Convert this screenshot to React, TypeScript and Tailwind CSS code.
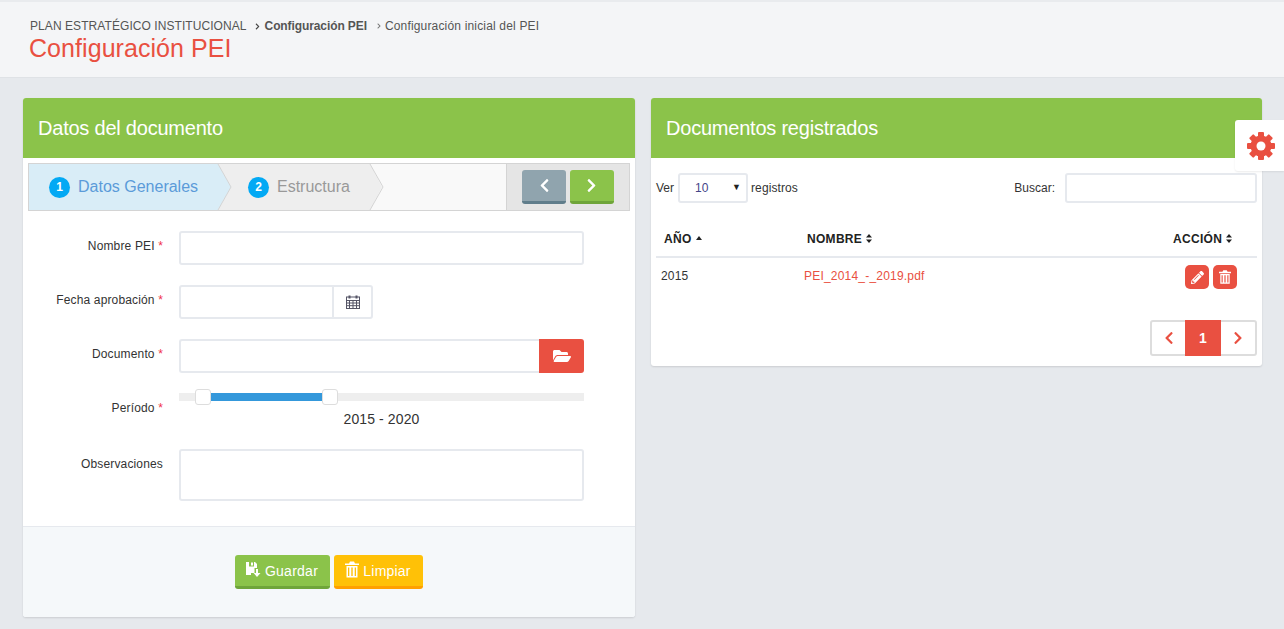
import React from "react";
import { FaChevronLeft, FaChevronRight, FaFolderOpen, FaPencilAlt } from "react-icons/fa";

const RED = "bg-[#e95041]";

function TrashIcon({ className }: { className?: string }) {
  return (
    <svg viewBox="0 0 14 16" className={className} fill="currentColor">
      <path d="M5 0h4l1 2h4v1.500H0V2h4zM1.500 4.500h11V16h-11zM3 6v8.500h1.300V6zm3.300 0v8.500h1.400V6zm3.400 0v8.500H11V6z" fillRule="evenodd" />
    </svg>
  );
}

function SaveIcon() {
  return (
    <svg viewBox="0 0 15 15" className="w-[15px] h-[15px] mt-[-3px]" fill="currentColor">
      <path d="M0 0h3v4.500h5V0h1l2 2v4H8.500v5H5v2H0z" />
      <path d="M5 0.500h2v3H5z" />
      <path d="M10 7h2v4h2.500L11 15l-3.500-4H10z" />
    </svg>
  );
}

function CalendarIcon() {
  return (
    <svg viewBox="0 0 14 14" className="w-[14px] h-[14px]" fill="none" stroke="currentColor" strokeWidth="1">
      <rect x="0.500" y="2" width="13" height="11.500" />
      <path d="M0.500 5.500h13M0.500 8h13M0.500 10.700h13M3.500 5.500v8M7 5.500v8M10.500 5.500v8" />
      <path d="M3.500 0.500v3M10.500 0.500v3" strokeWidth="2" />
    </svg>
  );
}

function GearIcon() {
  return (
    <svg viewBox="0 0 28 28" className="w-[28px] h-[28px]" fill="currentColor">
      <rect x="11" width="6" height="28" rx="1" />
      <rect x="11" width="6" height="28" rx="1" transform="rotate(45 14 14)" />
      <rect x="11" width="6" height="28" rx="1" transform="rotate(90 14 14)" />
      <rect x="11" width="6" height="28" rx="1" transform="rotate(135 14 14)" />
      <circle cx="14" cy="14" r="10.500" />
      <circle cx="14" cy="14" r="4.500" fill="#ffffff" />
    </svg>
  );
}

function SortBoth() {
  return (
    <svg viewBox="0 0 6 9" className="w-[6px] h-[9px] ml-[4px]" fill="currentColor">
      <path d="M3 0l3 3.500H0zM3 9L0 5.500h6z" />
    </svg>
  );
}

function FormRow({ label, required = true, children }: { label: string; required?: boolean; children: React.ReactNode }) {
  return (
    <div className="flex">
      <label className="w-[140px] shrink-0 text-right text-[12px] leading-[18px] pt-[6px] text-[#333] tracking-[0.15px]">
        {label}
        {required && <span className="text-[#f0324b]"> *</span>}
      </label>
      <div className="ml-[16px] w-[405px]">{children}</div>
    </div>
  );
}

const inputCls = "block w-full h-[34px] bg-white border-2 border-[#e6e9ee] rounded-[3px] outline-none";

function Panel({ title, children }: { title: string; children: React.ReactNode }) {
  return (
    <section className="bg-white rounded-[3px] shadow-[0_1px_2px_rgba(0,0,0,0.12)] overflow-hidden">
      <h2 className="h-[60px] bg-[#8bc34a] text-white text-[20px] tracking-[-0.22px] leading-[60px] pl-[15px]">{title}</h2>
      {children}
    </section>
  );
}

function Wizard() {
  return (
    <div className="relative mt-[5px] mx-[5px] h-[48px] border border-[#d4d4d4] bg-[#f9f9f9] flex">
      <div className="flex-1 relative">
        <svg className="absolute inset-0 w-[477px] h-[46px]" viewBox="0 0 477 46">
          <polygon points="189,0 341,0 353,23 341,46 189,46 202,23" fill="#eeeeee" />
          <polygon points="0,0 189,0 202,23 189,46 0,46" fill="#d9edf7" />
          <polyline points="189,0 202,23 189,46" fill="none" stroke="#d4d4d4" />
          <polyline points="341,0 354,23 341,46" fill="none" stroke="#d4d4d4" />
        </svg>
        <div className="relative flex items-center h-full">
          <div className="flex items-center w-[219px] pl-[20px] text-[16px] text-[#5b9bd9]">
            <span className="w-[21px] h-[21px] rounded-full bg-[#03a9f4] text-white text-[12px] font-bold flex items-center justify-center mr-[8px]">1</span>
            Datos Generales
          </div>
          <div className="flex items-center text-[16px] text-[#999]">
            <span className="w-[21px] h-[21px] rounded-full bg-[#03a9f4] text-white text-[12px] font-bold flex items-center justify-center mr-[8px]">2</span>
            Estructura
          </div>
        </div>
      </div>
      <div className="w-[123px] shrink-0 bg-[#e5e5e5] border-l border-[#d4d4d4] flex items-center pl-[15px] gap-[4px]">
        <button className="w-[44px] h-[34px] rounded-[3px] bg-[#90a4ae] border-b-[3px] border-[#607d8b] text-white flex items-center justify-center">
          <FaChevronLeft className="w-[15px] h-[15px]" />
        </button>
        <button className="w-[44px] h-[34px] rounded-[3px] bg-[#8bc34a] border-b-[3px] border-[#6fa53a] text-white flex items-center justify-center pr-[2px]">
          <FaChevronRight className="w-[15px] h-[15px]" />
        </button>
      </div>
    </div>
  );
}

function Slider() {
  return (
    <div className="h-[36px]">
      <div className="relative h-[8px] bg-[#eeeeee]">
        <div className="absolute left-[32px] w-[111px] h-full bg-[#3498db]" />
        <div className="absolute left-[16px] top-[-4px] w-[16px] h-[16px] bg-white border border-[#ddd] rounded-[3px]" />
        <div className="absolute left-[143px] top-[-4px] w-[16px] h-[16px] bg-white border border-[#ddd] rounded-[3px]" />
      </div>
      <div className="text-center text-[14px] leading-[20px] mt-[8px] text-[#333] tracking-[0.1px]">2015 - 2020</div>
    </div>
  );
}

function LeftPanel() {
  return (
    <Panel title="Datos del documento">
      <Wizard />
      <div className="mt-[20px] pb-[25px] flex flex-col gap-[20px]">
        <FormRow label="Nombre PEI">
          <input className={inputCls} />
        </FormRow>
        <FormRow label="Fecha aprobación">
          <div className="flex w-[194px] h-[34px] border-2 border-[#e6e9ee] rounded-[3px]">
            <input className="min-w-0 flex-1 outline-none" />
            <span className="w-[39px] border-l-2 border-[#e6e9ee] flex items-center justify-center text-[#555566]">
              <CalendarIcon />
            </span>
          </div>
        </FormRow>
        <FormRow label="Documento">
          <div className="flex">
            <input className="min-w-0 flex-1 h-[34px] border-2 border-r-0 border-[#e6e9ee] rounded-l-[3px] outline-none" />
            <span className={`w-[45px] h-[34px] ${RED} rounded-r-[3px] text-white flex items-center justify-center`}>
              <FaFolderOpen className="w-[18px] h-[16px]" />
            </span>
          </div>
        </FormRow>
        <FormRow label="Período">
          <Slider />
        </FormRow>
        <FormRow label="Observaciones" required={false}>
          <textarea className="block w-full h-[52px] border-2 border-[#e6e9ee] rounded-[3px] outline-none resize-none" />
        </FormRow>
      </div>
      <div className="border-t border-[#e6e9ee] bg-[#f5f8fa] pt-[28px] pb-[28px] flex justify-center gap-[4px] pr-[1px]">
        <button className="w-[95px] h-[34px] pt-[1px] bg-[#8bc34a] border-b-[3px] border-[#6fa53a] rounded-[3px] text-white text-[14px] tracking-[0.25px] flex items-center justify-center gap-[4px]">
          <SaveIcon />
          Guardar
        </button>
        <button className="w-[89px] h-[34px] pt-[1px] bg-[#ffc107] border-b-[3px] border-[#ffa000] rounded-[3px] text-white text-[14px] tracking-[0.2px] flex items-center justify-center gap-[4px]">
          <TrashIcon className="w-[14px] h-[17px] mt-[-3px]" />
          Limpiar
        </button>
      </div>
    </Panel>
  );
}

function RightPanel() {
  return (
    <Panel title="Documentos registrados">
      <div className="px-[5px] pt-[15px] pb-[10px]">
        <div className="flex items-center h-[30px] text-[12px] text-[#333]">
          <span>Ver</span>
          <div className="ml-[4px] w-[70px] h-[30px] border-2 border-[#e6e9ee] rounded-[3px] flex items-center justify-between pl-[15px] pr-[5px] text-[#444488]">
            <span>10</span>
            <span className="text-[9px] text-[#222]">▼</span>
          </div>
          <span className="ml-[3px] tracking-[0.1px]">registros</span>
          <span className="ml-auto">Buscar:</span>
          <input className="ml-[10px] w-[192px] h-[30px] border-2 border-[#e6e9ee] rounded-[3px] outline-none" />
        </div>
        <div className="mt-[18px] h-[37px] border-b-2 border-[#e6e9ee] flex items-center text-[12px] font-bold text-[#222] tracking-[0.3px]">
          <div className="w-[151px] pl-[8px] flex items-center">
            AÑO
            <svg viewBox="0 0 6 4" className="w-[6px] h-[4px] ml-[4px] mb-[2px]" fill="currentColor"><path d="M3 0l3 4H0z" /></svg>
          </div>
          <div className="flex-1 flex items-center">NOMBRE<SortBoth /></div>
          <div className="w-[84px] flex items-center">ACCIÓN<SortBoth /></div>
        </div>
        <div className="h-[38px] pb-[2px] flex items-center text-[12px] text-[#333]">
          <div className="w-[148px] pl-[5px] tracking-[0.2px]">2015</div>
          <div className="flex-1 text-[#e95041] tracking-[0.2px]">PEI_2014_-_2019.pdf</div>
          <div className="w-[72px] flex gap-[4px] mt-[2px]">
            <span className={`w-[24px] h-[24px] ${RED} rounded-[5px] text-white flex items-center justify-center`}>
              <FaPencilAlt className="w-[13px] h-[13px]" />
            </span>
            <span className={`w-[24px] h-[24px] ${RED} rounded-[5px] text-white flex items-center justify-center`}>
              <TrashIcon className="w-[12px] h-[14px]" />
            </span>
          </div>
        </div>
        <div className="mt-[24px] flex justify-end">
          <div className="flex h-[36px] w-[107px] border-2 border-[#dddddd] rounded-[3px] text-[#e95041]">
            <span className="w-[33px] flex items-center justify-center"><FaChevronLeft className="w-[14px] h-[14px]" /></span>
            <span className={`w-[36px] h-[36px] mt-[-2px] ${RED} text-white text-[14px] font-bold flex items-center justify-center`}>1</span>
            <span className="flex-1 flex items-center justify-center"><FaChevronRight className="w-[14px] h-[14px]" /></span>
          </div>
        </div>
      </div>
    </Panel>
  );
}

export default function App() {
  return (
    <div className="relative h-[629px] overflow-hidden bg-[#e6e9ed] font-['Liberation_Sans',Arial,sans-serif]">
      <header className="h-[78px] bg-[#f4f5f7] border-t-2 border-[#e9ebee] border-b border-b-[#dfe2e6] pl-[29px] pt-[15px]">
        <nav className="flex items-center text-[12px] leading-[18px] text-[#555] pl-[1px]">
          <span className="tracking-[0.07px]">PLAN ESTRATÉGICO INSTITUCIONAL</span>
          <FaChevronRight className="w-[7px] h-[7px] ml-[7px] mr-[4px] text-[#444]" />
          <b className="font-bold tracking-[-0.1px]">Configuración PEI</b>
          <FaChevronRight className="w-[6px] h-[6px] ml-[9px] mr-[3px] text-[#777]" />
          <span className="tracking-[0.17px]">Configuración inicial del PEI</span>
        </nav>
        <h1 className="text-[25px] leading-[28px] tracking-[0.06px] text-[#e95041] mt-[-1px]">Configuración PEI</h1>
      </header>
      <main className="grid grid-cols-[612px_611px] gap-[16px] pl-[23px] pt-[20px] items-start">
        <LeftPanel />
        <RightPanel />
      </main>
      <div className="absolute left-[1235px] top-[120px] w-[49px] h-[51px] bg-white rounded-l-[3px] shadow-[0_1px_2px_rgba(0,0,0,0.08)] flex items-center pl-[12px] text-[#e95041]">
        <GearIcon />
      </div>
    </div>
  );
}
